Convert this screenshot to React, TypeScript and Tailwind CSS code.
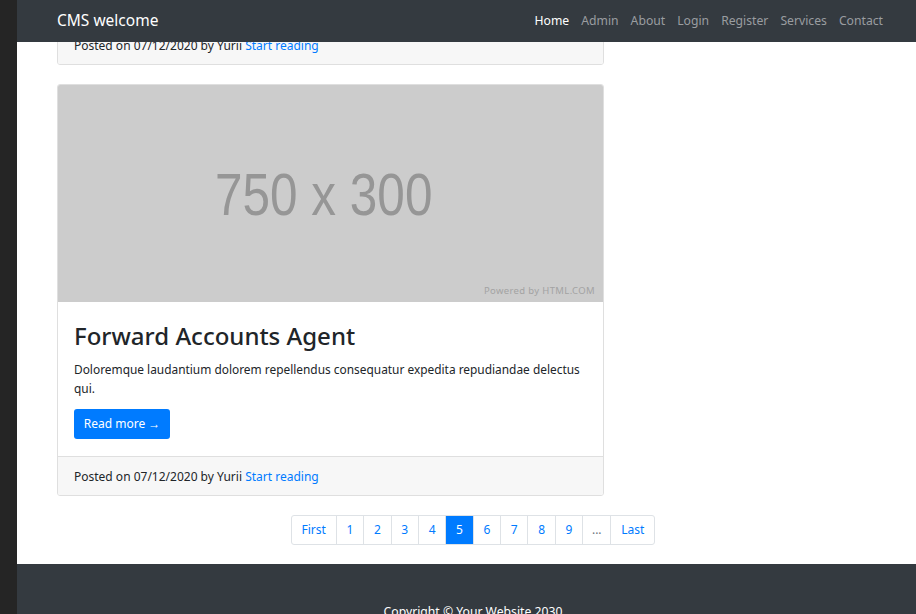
import React from "react";

const navLinks = ["Home", "Admin", "About", "Login", "Register", "Services", "Contact"];
const pages = ["First", "1", "2", "3", "4", "5", "6", "7", "8", "9", "...", "Last"];

const PostFooter = () => (
  <div className="h-[38px] flex items-center px-4 pt-[1px] bg-[#f7f7f7] text-[12px] text-[#212529]">
    Posted on 07/12/2020 by Yurii&nbsp;<a className="text-[#007bff]" href="#">Start reading</a>
  </div>
);

const App = () => {
  return (
    <div className="flex min-h-[614px] bg-[#252525] font-['Noto_Sans',sans-serif]">
      {/* dark gutter on the left */}
      <div className="w-[17px] shrink-0" />

      <div className="relative flex-1 flex flex-col bg-white overflow-hidden h-[614px]">
        {/* Navbar (fixed over the scrolled content) */}
        <nav className="absolute top-0 left-0 right-0 z-10 h-[42px] bg-[#343a40] flex items-center justify-between pl-[40px] pr-[33px]">
          <a className="text-white text-[15.5px]" href="#">CMS welcome</a>
          <ul className="flex gap-[12px] text-[12.2px]">
            {navLinks.map((l, i) => (
              <li key={l} className={i === 0 ? "text-white" : "text-[#9a9da0]"}>{l}</li>
            ))}
          </ul>
        </nav>

        <main className="pt-[25px] pl-[40px] pr-[27px]">
          <div className="w-[547px]">
            {/* previous post, scrolled mostly out of view */}
            <div className="border border-[#dfdfdf] rounded-[3px] overflow-hidden">
              <PostFooter />
            </div>

            {/* post card */}
            <div className="mt-[19px] border border-[#dfdfdf] rounded-[3px] overflow-hidden">
              <div className="relative h-[217px] bg-[#cccccc] flex items-center justify-center">
                <span className="font-['Liberation_Sans',sans-serif] text-[58.6px] leading-none text-[#969696] -translate-x-[7px] translate-y-[2px] scale-x-[0.845]">
                  750 x 300
                </span>
                <span className="absolute right-[8px] bottom-[4px] text-[9.5px] tracking-[0.35px] text-[#a3a3a3]">Powered by HTML.COM</span>
              </div>
              <div className="px-4 pt-[19px] pb-[17px] border-b border-[#dfdfdf]">
                <h2 className="text-[24px] leading-[29px] text-[#212529] font-medium">Forward Accounts Agent</h2>
                <p className="mt-[10px] text-[11.9px] leading-[19px] text-[#212529]">
                  Doloremque laudantium dolorem repellendus consequatur expedita repudiandae delectus qui.
                </p>
                <button className="mt-[11px] h-[30px] w-[96px] rounded-[3px] bg-[#007bff] text-white text-[12px]">
                  Read more &rarr;
                </button>
              </div>
              <PostFooter />
            </div>
          </div>

          {/* pagination */}
          <div className="mt-[19px] flex justify-center">
            <ul className="flex h-[30px] text-[12px] border border-[#dee2e6] rounded-[3px]">
              {pages.map((p, i) => {
                const active = p === "5";
                const wide = p === "First" || p === "Last";
                return (
                  <li
                    key={p}
                    className={`flex items-center justify-center ${wide ? "w-[44px]" : p === "..." ? "w-[28px]" : "w-[27.4px]"} ${
                      i > 0 ? "border-l border-[#dee2e6]" : ""
                    } ${active ? "bg-[#007bff] text-white" : p === "..." ? "text-[#6c757d]" : "text-[#007bff]"}`}
                  >
                    {p}
                  </li>
                );
              })}
            </ul>
          </div>
        </main>

        {/* footer */}
        <footer className="mt-[19px] flex-1 bg-[#343a40] pt-[39px] pl-[40px] pr-[27px]">
          <p className="text-center text-white text-[12.2px] leading-[18px]">Copyright &copy; Your Website 2030</p>
        </footer>
      </div>
    </div>
  );
};

export default App;
